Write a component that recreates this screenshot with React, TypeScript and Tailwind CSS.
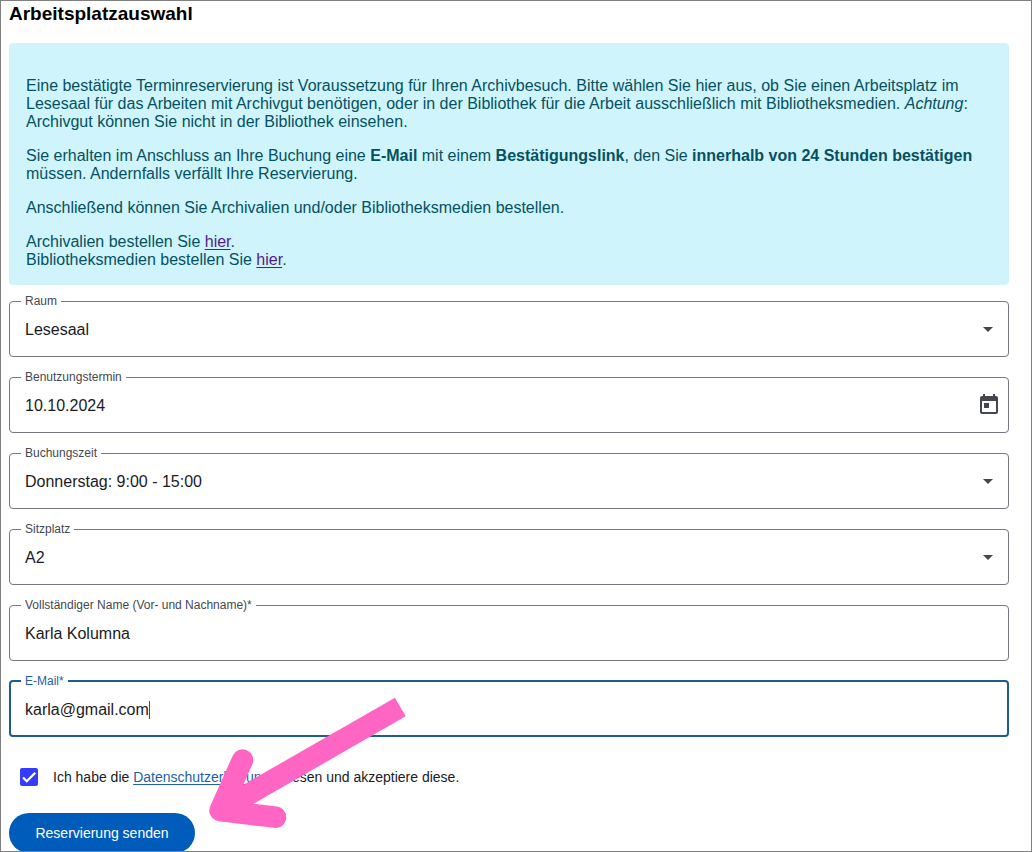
import React, { useState } from 'react'

const control = 'block w-full h-[42px] appearance-none bg-transparent pl-[15px] pr-12 text-base text-[#1a1b1f] outline-none'

function Field({ id, label, active, children }:{ id:string; label:string; active?:boolean; children:React.ReactNode }){
  return (
    <fieldset className={`relative min-w-0 rounded ${active ? 'border-2 border-[#1f5c8f] pb-1' : 'border border-[#74777f] pb-[5px]'}`}>
      <legend className={`${active ? 'ml-2.5' : 'ml-[11px]'} px-1 text-xs leading-4`}>
        <label htmlFor={id} className={`block ${active ? 'text-[#1f5fa8]' : 'text-[#44474e]'}`}>{label}</label>
      </legend>
      {children}
    </fieldset>
  )
}

function SelectField({ id, label, options }:{ id:string; label:string; options:string[] }){
  return (
    <Field id={id} label={label}>
      <div className="relative">
        <select id={id} className={control}>
          {options.map(o => <option key={o}>{o}</option>)}
        </select>
        <svg viewBox="0 0 24 24" className="pointer-events-none absolute right-2 top-2 size-6 fill-[#44474e]" aria-hidden="true">
          <path d="M7 10l5 5 5-5z" />
        </svg>
      </div>
    </Field>
  )
}

export default function App(){
  const [date, setDate] = useState('10.10.2024')
  const [name, setName] = useState('Karla Kolumna')
  const [email, setEmail] = useState('karla@gmail.com')
  const [accepted, setAccepted] = useState(true)

  return (
    <main className="relative h-screen overflow-hidden border border-[#808080] bg-white pl-2 pr-[22px] font-['Liberation_Sans',Arial,sans-serif]">
      <h1 className="mb-4 text-[19px] leading-[26px] font-bold text-black">Arbeitsplatzauswahl</h1>

      <section className="mb-2 flex flex-col gap-4 rounded bg-[#cff4fc] px-[17px] pt-[34px] pb-4 text-base leading-[18px] text-[#055160]">
        <p>
          Eine bestätigte Terminreservierung ist Voraussetzung für Ihren Archivbesuch. Bitte wählen Sie hier aus, ob Sie einen Arbeitsplatz im
          Lesesaal für das Arbeiten mit Archivgut benötigen, oder in der Bibliothek für die Arbeit ausschließlich mit Bibliotheksmedien. <em>Achtung</em>:
          Archivgut können Sie nicht in der Bibliothek einsehen.
        </p>
        <p>
          Sie erhalten im Anschluss an Ihre Buchung eine <strong>E-Mail</strong> mit einem <strong>Bestätigungslink</strong>, den Sie <strong>innerhalb von 24 Stunden bestätigen</strong> müssen. Andernfalls verfällt Ihre Reservierung.
        </p>
        <p>Anschließend können Sie Archivalien und/oder Bibliotheksmedien bestellen.</p>
        <p>
          Archivalien bestellen Sie <a href="#archivalien" className="text-[#551a8b] underline underline-offset-2">hier</a>.<br />
          Bibliotheksmedien bestellen Sie <a href="#bibliothek" className="text-[#551a8b] underline underline-offset-2">hier</a>.
        </p>
      </section>

      <form onSubmit={e => e.preventDefault()}>
        <div className="flex flex-col gap-3">
          <SelectField id="raum" label="Raum" options={['Lesesaal']} />
          <Field id="termin" label="Benutzungstermin">
            <div className="relative">
              <input id="termin" className={control} value={date} onChange={e => setDate(e.target.value)} />
              <button type="button" aria-label="Kalender öffnen" className="absolute right-[7px] top-2 size-6">
                <svg viewBox="0 0 24 24" className="size-6 fill-[#44474e]" aria-hidden="true">
                  <path d="M19 3h-1V1h-2v2H8V1H6v2H5c-1.11 0-1.99.9-1.99 2L3 19c0 1.1.89 2 2 2h14c1.1 0 2-.9 2-2V5c0-1.1-.9-2-2-2zm0 16H5V8h14v11zM7 10h5v5H7z" />
                </svg>
              </button>
            </div>
          </Field>
          <SelectField id="zeit" label="Buchungszeit" options={['Donnerstag: 9:00 - 15:00']} />
          <SelectField id="platz" label="Sitzplatz" options={['A2']} />
          <Field id="name" label="Vollständiger Name (Vor- und Nachname)*">
            <input id="name" className={control} value={name} onChange={e => setName(e.target.value)} />
          </Field>
          <Field id="email" label="E-Mail*" active>
            <div className="flex items-center pl-3.5">
              <input id="email" type="text" inputMode="email" className="h-[42px] max-w-full field-sizing-content bg-transparent text-base text-[#1a1b1f] caret-transparent outline-none" value={email} onChange={e => setEmail(e.target.value)} />
              <span className="h-[18px] w-px bg-[#1f5c8f]" aria-hidden="true" />
            </div>
          </Field>
        </div>

        <div className="mt-5 flex h-10 items-center gap-[15px] pl-[11px] text-sm text-[#1a1b1f]">
          <span className="relative flex size-[18px]">
            <input id="datenschutz" type="checkbox" checked={accepted} onChange={e => setAccepted(e.target.checked)} className="peer size-[18px] appearance-none rounded-xs border-2 border-[#44474e] checked:border-[#343dff] checked:bg-[#343dff]" />
            <svg viewBox="0 0 24 24" className="pointer-events-none absolute inset-0 hidden size-[18px] fill-none stroke-white stroke-3 peer-checked:block" aria-hidden="true">
              <path d="M4.1 12.7 9 17.6 20.3 6.3" />
            </svg>
          </span>
          <label htmlFor="datenschutz">
            Ich habe die <a href="#datenschutz" className="text-[#1f5fa8] underline underline-offset-2">Datenschutzerklärung</a> gelesen und akzeptiere diese.
          </label>
        </div>

        <button type="submit" className="mt-4 h-10 w-[186px] rounded-full bg-[#005cbb] text-sm text-white">Reservierung senden</button>
      </form>

      {/* hint arrow over the form, pointing at the submit button */}
      <svg viewBox="208 696 200 134" className="pointer-events-none absolute left-[207px] top-[695px] h-[134px] w-[200px] fill-none stroke-[#ff66c4]" strokeWidth="21.5" aria-hidden="true">
        <path d="M400.3 707 220 810.5" />
        <path d="M242.5 760 220 810.5 275.5 817.2" strokeLinecap="round" strokeLinejoin="round" />
      </svg>
    </main>
  )
}
